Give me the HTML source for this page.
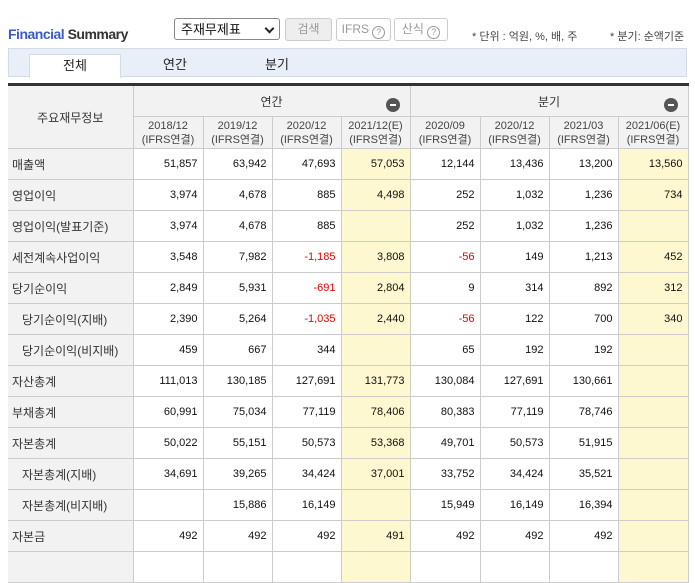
<!DOCTYPE html>
<html><head><meta charset="utf-8"><style>
body{margin:0;background:#fff;font-family:"Liberation Sans","Noto Sans CJK KR",sans-serif;width:695px;height:555px;overflow:hidden;position:relative}
.t{position:absolute;left:8px;top:26px;font-size:14px;font-weight:bold;color:#333;letter-spacing:-0.5px}
.t span{color:#3b5bc6}
.sel{position:absolute;left:174px;top:18px;width:106px;height:22px;border:1px solid #888;border-radius:3px;font-size:13px;line-height:22px;padding-left:6px;box-sizing:border-box;color:#111}
.sel:after{content:"";position:absolute;right:6px;top:6px;width:5px;height:5px;border-right:2px solid #222;border-bottom:2px solid #222;transform:rotate(45deg)}
.btn{position:absolute;top:18px;height:23px;border:1px solid #ccc;border-radius:3px;box-sizing:border-box;font-size:12px;color:#999;line-height:21px;text-align:center}
.q{display:inline-block;width:11px;height:11px;border:1px solid #999;border-radius:50%;font-size:9px;line-height:11px;vertical-align:-2px}
.u{position:absolute;top:28px;font-size:11px;color:#444}
.tabs{position:absolute;left:8px;top:48px;width:679px;height:29px;background:#e9eff9;border:1px solid #d3dbe9;box-sizing:border-box}
.tab{position:absolute;top:5px;height:24px;font-size:13px;color:#222;line-height:22px;text-align:center;width:92px}
.tab.a{background:#fff;border:1px solid #d3dbe9;border-bottom:none;box-sizing:border-box}
table{position:absolute;left:8px;top:83px;border-collapse:collapse;table-layout:fixed;border-top:3px solid #333;font-size:11px}
td,th{border:1px solid #ccc;padding:0;font-weight:normal}
th{background:#f2f2f2;color:#333}
.h1 th{height:30px;font-size:12px;position:relative}
.h2 th{height:31px;font-size:11px;line-height:14px;color:#444}
.lab{background:#f2f2f2;text-align:left;padding-left:4px;font-size:12px;color:#333;border-left:none}
.ind{padding-left:14px}
td{height:30px;text-align:right;padding-right:5px;color:#111}
.y{background:#fdf8d0}
.r{color:#e00}
.m{position:absolute;right:10px;top:12px;width:14px;height:14px;border-radius:50%;background:#555}
.m:after{content:"";position:absolute;left:4px;top:6px;width:6px;height:2px;background:#fff}
</style></head><body>
<div class="t"><span>Financial</span> Summary</div>
<div class="sel">주재무제표</div>
<div class="btn" style="left:285px;width:47px;background:#eee">검색</div>
<div class="btn" style="left:336px;width:55px">IFRS <span class="q">?</span></div>
<div class="btn" style="left:394px;width:54px">산식 <span class="q">?</span></div>
<div class="u" style="left:472px">* 단위 : 억원, %, 배, 주</div>
<div class="u" style="left:610px">* 분기: 순액기준</div>
<div class="tabs">
<div class="tab a" style="left:20px">전체</div>
<div class="tab" style="left:120px">연간</div>
<div class="tab" style="left:222px">분기</div>
</div>
<table>
<colgroup><col style="width:125px"><col style="width:70px"><col style="width:69px"><col style="width:69px"><col style="width:69px"><col style="width:70px"><col style="width:69px"><col style="width:69px"><col style="width:70px"></colgroup>
<tr class="h1"><th rowspan="2" style="border-left:none">주요재무정보</th><th colspan="4">연간<span class="m"></span></th><th colspan="4">분기<span class="m"></span></th></tr>
<tr class="h2"><th>2018/12<br>(IFRS연결)</th><th>2019/12<br>(IFRS연결)</th><th>2020/12<br>(IFRS연결)</th><th>2021/12(E)<br>(IFRS연결)</th><th>2020/09<br>(IFRS연결)</th><th>2020/12<br>(IFRS연결)</th><th>2021/03<br>(IFRS연결)</th><th>2021/06(E)<br>(IFRS연결)</th></tr>
<tr><th class="lab">매출액</th><td>51,857</td><td>63,942</td><td>47,693</td><td class="y">57,053</td><td>12,144</td><td>13,436</td><td>13,200</td><td class="y">13,560</td></tr>
<tr><th class="lab">영업이익</th><td>3,974</td><td>4,678</td><td>885</td><td class="y">4,498</td><td>252</td><td>1,032</td><td>1,236</td><td class="y">734</td></tr>
<tr><th class="lab">영업이익(발표기준)</th><td>3,974</td><td>4,678</td><td>885</td><td class="y"></td><td>252</td><td>1,032</td><td>1,236</td><td class="y"></td></tr>
<tr><th class="lab">세전계속사업이익</th><td>3,548</td><td>7,982</td><td class="r">-1,185</td><td class="y">3,808</td><td class="r">-56</td><td>149</td><td>1,213</td><td class="y">452</td></tr>
<tr><th class="lab">당기순이익</th><td>2,849</td><td>5,931</td><td class="r">-691</td><td class="y">2,804</td><td>9</td><td>314</td><td>892</td><td class="y">312</td></tr>
<tr><th class="lab ind">당기순이익(지배)</th><td>2,390</td><td>5,264</td><td class="r">-1,035</td><td class="y">2,440</td><td class="r">-56</td><td>122</td><td>700</td><td class="y">340</td></tr>
<tr><th class="lab ind">당기순이익(비지배)</th><td>459</td><td>667</td><td>344</td><td class="y"></td><td>65</td><td>192</td><td>192</td><td class="y"></td></tr>
<tr><th class="lab">자산총계</th><td>111,013</td><td>130,185</td><td>127,691</td><td class="y">131,773</td><td>130,084</td><td>127,691</td><td>130,661</td><td class="y"></td></tr>
<tr><th class="lab">부채총계</th><td>60,991</td><td>75,034</td><td>77,119</td><td class="y">78,406</td><td>80,383</td><td>77,119</td><td>78,746</td><td class="y"></td></tr>
<tr><th class="lab">자본총계</th><td>50,022</td><td>55,151</td><td>50,573</td><td class="y">53,368</td><td>49,701</td><td>50,573</td><td>51,915</td><td class="y"></td></tr>
<tr><th class="lab ind">자본총계(지배)</th><td>34,691</td><td>39,265</td><td>34,424</td><td class="y">37,001</td><td>33,752</td><td>34,424</td><td>35,521</td><td class="y"></td></tr>
<tr><th class="lab ind">자본총계(비지배)</th><td></td><td>15,886</td><td>16,149</td><td class="y"></td><td>15,949</td><td>16,149</td><td>16,394</td><td class="y"></td></tr>
<tr><th class="lab">자본금</th><td>492</td><td>492</td><td>492</td><td class="y">491</td><td>492</td><td>492</td><td>492</td><td class="y"></td></tr>
<tr><th class="lab"></th><td></td><td></td><td></td><td class="y"></td><td></td><td></td><td></td><td class="y"></td></tr>
</table>
</body></html>
